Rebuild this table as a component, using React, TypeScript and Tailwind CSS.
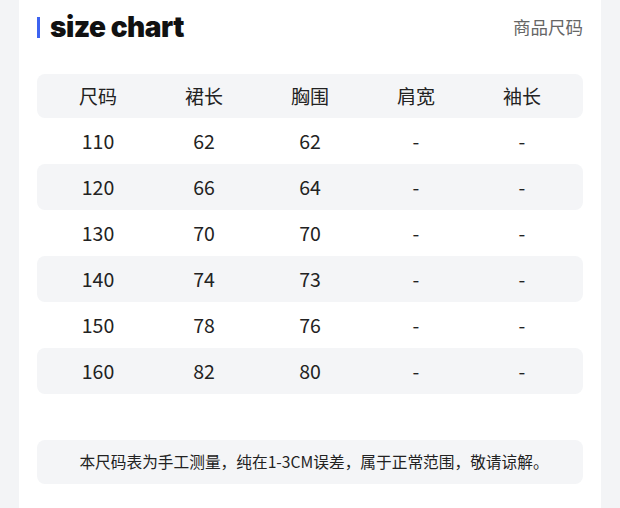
import React from 'react'

const rows = [
  ['110', '62', '62', '-', '-'],
  ['120', '66', '64', '-', '-'],
  ['130', '70', '70', '-', '-'],
  ['140', '74', '73', '-', '-'],
  ['150', '78', '76', '-', '-'],
  ['160', '82', '80', '-', '-'],
]

const headers = ['尺码', '裙长', '胸围', '肩宽', '袖长']

const cjk = { fontFamily: '"Noto Sans CJK SC", "Noto Sans", sans-serif' }

const App = () => {
  return (
    <div className="min-h-[508px] w-[620px] bg-[#f3f4f6] px-[19px]" style={cjk}>
      <div className="h-[508px] bg-white px-[18px]">
        <div className="flex h-[56px] items-center justify-between pb-[2px]">
          <div className="flex items-center">
            <div className="h-[21px] w-[3px] bg-[#3d63f0]"></div>
            <h1 className="ml-[10px] text-[28px] font-black leading-none tracking-[-0.5px] text-[#111]" style={{ fontFamily: 'Inter, "Noto Sans", sans-serif' }}>size chart</h1>
          </div>
          <div className="text-[17.5px] text-[#666]">商品尺码</div>
        </div>

        <div className="mt-[18px]">
          <div className="grid h-[44px] grid-cols-5 items-center rounded-lg bg-[#f4f5f7] px-2 text-[19px] text-[#222]">
            {headers.map((h) => (
              <div key={h} className="text-center">{h}</div>
            ))}
          </div>
          {rows.map((row, i) => (
            <div
              key={row[0]}
              className={`grid h-[46px] grid-cols-5 items-center rounded-lg px-2 text-[19.5px] text-[#222] ${i % 2 === 1 ? 'bg-[#f4f5f7]' : ''}`}
            >
              {row.map((cell, j) => (
                <div key={j} className="text-center">{cell}</div>
              ))}
            </div>
          ))}
        </div>

        <div className="mt-[46px] flex h-[44px] items-center justify-center rounded-lg bg-[#f4f5f7] pl-[8px] text-[15.7px] text-[#222]">
          本尺码表为手工测量，纯在1-3CM误差，属于正常范围，敬请谅解。
        </div>
      </div>
    </div>
  )
}

export default App
